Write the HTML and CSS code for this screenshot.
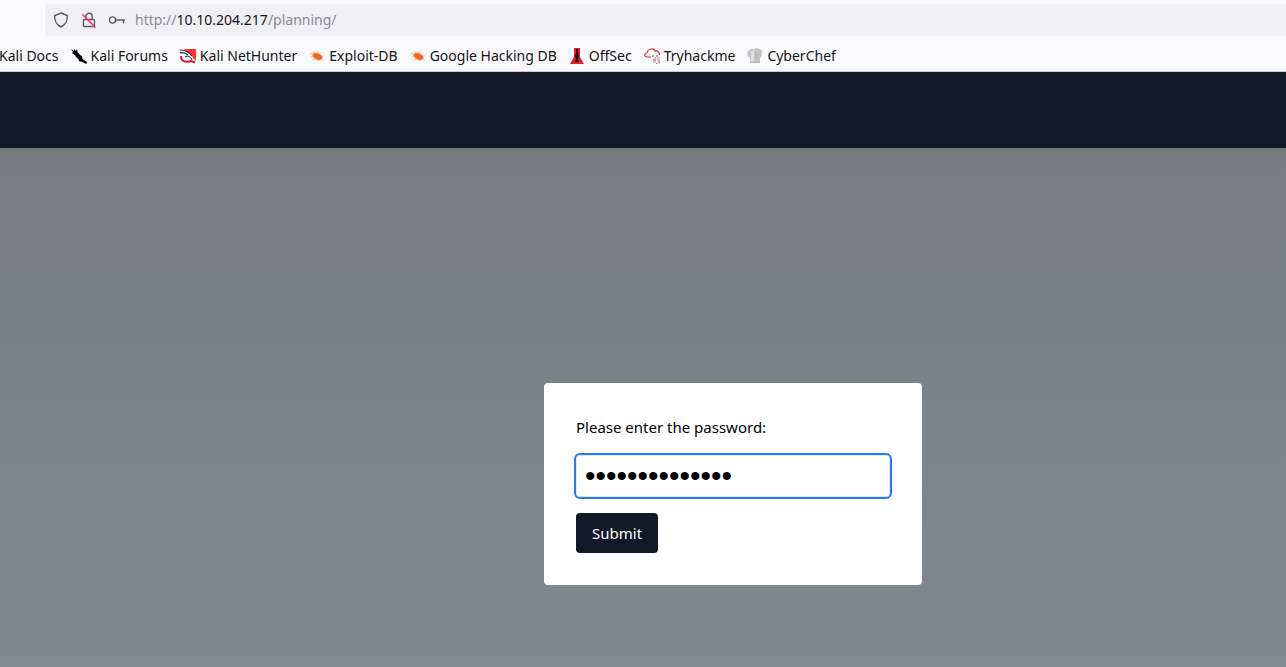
FILE: index.html
```
<!DOCTYPE html>
<html lang="en">
<head>
<meta charset="utf-8">
<title>Planning</title>
<link rel="stylesheet" href="styles.css">
</head>
<body>
<header class="chrome">
  <div class="address">
    <svg class="tool" viewBox="0 0 16 16"><path d="M8 1 14.3 3.5C14.7 8 12.5 12.9 8 15 3.500 12.900 1.300 8 1.700 3.500Z"/></svg>
    <svg class="tool" viewBox="0 0 16 16"><path d="M4.800 7V4.500a3.200 3.200 0 0 1 6.400 0V7M3.500 7.500h9q1 0 1 1v5q0 1-1 1h-9q-1 0-1-1v-5q0-1 1-1Z"/><path class="slash" d="M1.500 2.500 14.500 15.500"/></svg>
    <svg class="tool" viewBox="0 0 16 16"><circle cx="3.500" cy="8" r="3.100"/><path d="M6.600 8H16M14.500 8v3.500"/></svg>
    <span class="url">http://<span class="host">10.10.204.217</span>/planning/</span>
  </div>
  <nav class="bookmarks">
    <a href="#" class="mark">Kali Docs</a>
    <a href="#" class="mark">
      <svg class="icon" viewBox="0 0 16 16"><path d="M0 1 3 3V1L5 3 6 1 6.500 4 9 7 11 8 11.500 11 16 14 15.500 16 11 14 8 13 7.500 11 5 9 4 7 1 5 2 4Z"/></svg>Kali Forums</a>
    <a href="#" class="mark">
      <svg class="icon" viewBox="0 0 16 16"><path fill="#ff3236" d="M4 1H16V13L11 8Z"/><path fill="#fff" d="M1 2C6 2 11 5 13 10L15 14C11 14 10 10 7 9 4 8 3 10 4 12H1Z"/><path fill="none" stroke="#25202a" stroke-width="1.200" d="M0 2C5 2 9 4 12 8M0 5C3 4 6 5 8 7"/><path fill="none" stroke="#c51d40" stroke-width="2" d="M1 8C1 13 5 15 11 13L15 14.500"/><path fill="none" stroke="#25202a" d="M5 9C8 7 11 9 12 12"/></svg>Kali NetHunter</a>
    <a href="#" class="mark">
      <svg class="icon bug" viewBox="0 0 16 16"><ellipse cx="8.500" cy="8.500" rx="5" ry="3" transform="rotate(24 8.500 8.500)"/><path d="M4 6 1 5M6 5 4 3M9 5 9 3M12 8 15 8M4 8 2 9M6 11 4 12M10 12 9 13M13 11 15 13"/></svg>Exploit-DB</a>
    <a href="#" class="mark">
      <svg class="icon bug" viewBox="0 0 16 16"><ellipse cx="8.500" cy="8.500" rx="5" ry="3" transform="rotate(24 8.500 8.500)"/><path d="M4 6 1 5M6 5 4 3M9 5 9 3M12 8 15 8M4 8 2 9M6 11 4 12M10 12 9 13M13 11 15 13"/></svg>Google Hacking DB</a>
    <a href="#" class="mark">
      <svg class="icon" viewBox="0 0 16 16"><path fill="#df2029" d="M5 0H11V9L15 16H1L5 9Z"/><path fill="#1d1115" d="M7 1H9V5L10 8 9 11 10 14H6L7 11 6 8 7 5Z"/></svg>OffSec</a>
    <a href="#" class="mark">
      <svg class="icon" viewBox="0 0 16 16" fill="none"><path stroke="#d9303b" stroke-width="1.200" d="M7 9H3C0 9 0 5 3 5 4 0 10 0 11 3 14 2 16 5 15 7"/><path stroke="#d9303b" d="M8 8h2M12 8h2M9 12h3M14 14h2"/><path stroke="#9a9da2" d="M10 10h2M13 10h3M13 12h3M9 14h3M12 15.500h2"/></svg>Tryhackme</a>
    <a href="#" class="mark">
      <svg class="icon" viewBox="0 0 16 16"><path fill="#c5c7c6" d="M3 15V10C0 9-1 4 2 2 4 0 6 1 7 1 9-.5 11 0 12 1 16 1 16 7 13 10V15Z"/><path fill="#dededd" d="M4 10V3L7 2V14H4Z"/><path stroke="#adb0ae" d="M9 4v7M11 6v5M3 14h10"/></svg>CyberChef</a>
  </nav>
</header>
<main class="page">
  <div class="banner"></div>
  <div class="overlay">
    <form class="dialog">
      <label class="prompt" for="password">Please enter the password:</label>
      <input class="field" id="password" type="password" value="planningsecret">
      <button class="submit" type="button">Submit</button>
    </form>
  </div>
</main>
</body>
</html>
```
FILE: styles.css
```
* { box-sizing: border-box; }
body {
  margin: 0;
  min-height: 100vh;
  display: flex;
  flex-direction: column;
  overflow: hidden;
  font-family: "Noto Sans", sans-serif;
  font-size: 15px;
  line-height: 24px;
}
.chrome {
  background: #f9f9fb;
  border-bottom: 1px solid #cccccf;
  padding-top: 4px;
  color: #15141a;
  font-size: 14px;
}
.address {
  display: flex;
  align-items: center;
  gap: 12px;
  height: 32px;
  margin-left: 45px;
  padding-left: 8px;
  background: #f0f0f4;
  border-radius: 4px 0 0 4px;
}
.tool {
  width: 16px;
  height: 16px;
  fill: none;
  stroke: #5b5b66;
  stroke-width: 1.4;
}
.slash { stroke: #ff2850; }
.url { color: #8b8b91; margin-left: -2px; }
.host { color: #15141a; }
.bookmarks {
  display: flex;
  align-items: center;
  gap: 12px;
  height: 35px;
  margin-left: -1px;
  padding-top: 4px;
  white-space: nowrap;
}
.mark {
  display: flex;
  align-items: center;
  gap: 4px;
  color: inherit;
  text-decoration: none;
}
.icon { width: 16px; height: 16px; flex: none; }
.bug { fill: #ef6820; stroke: #f0884f; stroke-width: 0.6; }
.page {
  flex: 1;
  display: flex;
  flex-direction: column;
}
.banner { height: 76px; background: #111827; }
.overlay {
  flex: 1;
  padding: 235px 0 82px 180px;
  background: linear-gradient(#777b81, #83878f);
}
.dialog {
  width: 378px;
  margin: 0 auto;
  padding: 32px;
  display: flex;
  flex-direction: column;
  align-items: flex-start;
  background: #fff;
  border-radius: 4px;
}
.prompt { margin-bottom: 16px; color: #000; }
.field {
  width: 100%;
  height: 42px;
  margin-bottom: 16px;
  padding: 0 8px;
  border: 1px solid #e5e7eb;
  border-radius: 4px;
  outline: 2px solid #2878ff;
  font-family: "Liberation Sans", sans-serif;
  font-size: 30px;
  color: #000;
}
.submit {
  height: 40px;
  padding: 8px 16px;
  border: 0;
  border-radius: 4px;
  background: #111827;
  color: #fff;
  font: inherit;
}
```
